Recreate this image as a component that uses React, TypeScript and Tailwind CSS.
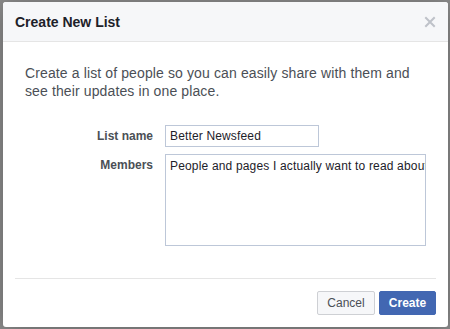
import React from "react";

export default function App() {
  return (
    <div
      className="w-[450px] h-[329px] bg-[#8d8d8d] pt-[2px] pl-[3px] pr-[2px] pb-[2px] overflow-hidden"
      style={{ fontFamily: '"Liberation Sans", Arial, Helvetica, sans-serif' }}
    >
      <div className="w-[445px] h-[325px] bg-white rounded-[3px] overflow-hidden flex flex-col shadow-[0_2px_26px_rgba(0,0,0,0.3)]">
        {/* Header */}
        <div className="h-[40px] shrink-0 bg-[#f6f7f9] border-b border-[#e5e5e5] flex items-center justify-between pl-[12px] pr-[12px]">
          <div className="text-[14px] font-bold text-[#1d2129] leading-[18px] pt-[1px]">Create New List</div>
          <svg width="12" height="12" viewBox="0 0 12 12" className="mt-[1px]">
            <path d="M2 2 L10 10 M10 2 L2 10" stroke="#bec2c9" strokeWidth="2" strokeLinecap="square" />
          </svg>
        </div>
        {/* Body */}
        <div className="flex-1 flex flex-col pt-[22px] px-[22px]">
          <p className="text-[14px] leading-[18px] text-[#4b4f56] m-0 tracking-[0.12px]">
            Create a list of people so you can easily share with them and see their updates in one place.
          </p>
          <div className="mt-[25px] flex flex-col gap-[7px]">
            <div className="flex items-start">
              <div className="w-[128px] text-right text-[12px] font-bold text-[#4b4f56] leading-[22px]">List name</div>
              <div className="ml-[12px] w-[154px] h-[22px] border border-[#bdc7d8] bg-white px-[4px] text-[12px] text-[#1d2129] leading-[20px] whitespace-nowrap overflow-hidden tracking-[0.15px]">
                Better Newsfeed
              </div>
            </div>
            <div className="flex items-start">
              <div className="w-[128px] text-right text-[12px] font-bold text-[#4b4f56] leading-[22px]">Members</div>
              <div className="ml-[12px] w-[261px] h-[92px] border border-[#bdc7d8] bg-white pl-[4px] pt-[2px] text-[12px] text-[#1d2129] leading-[18px] whitespace-nowrap overflow-hidden tracking-[0.17px]">
                People and pages I actually want to read about
              </div>
            </div>
          </div>
        </div>
        {/* Footer */}
        <div className="mx-[12px] border-t border-[#e5e5e5] pt-[12px] pb-[12px] flex justify-end gap-[4px]">
          <button className="h-[24px] w-[58px] border border-[#ced0d4] bg-[#f6f7f9] rounded-[2px] text-[12px] text-[#4b4f56] leading-[22px]">
            Cancel
          </button>
          <button className="h-[24px] w-[57px] border border-[#4267b2] bg-[#4267b2] rounded-[2px] text-[12px] font-bold text-white leading-[22px]">
            Create
          </button>
        </div>
      </div>
    </div>
  );
}
